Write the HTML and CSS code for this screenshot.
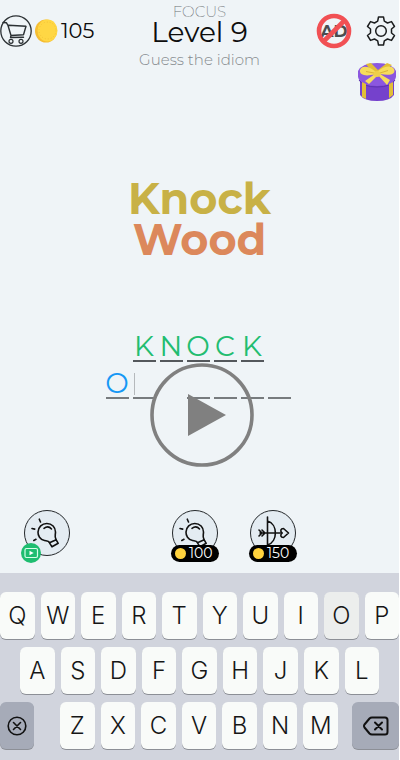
FILE: index.html
```html
<!DOCTYPE html>
<html lang="en">
<head>
<meta charset="utf-8">
<meta name="viewport" content="width=device-width, initial-scale=1">
<title>Guess the idiom</title>
<link rel="stylesheet" href="styles.css">
</head>
<body>
<svg class="symbols" aria-hidden="true">
  <symbol id="bulb" viewBox="1 1 44 44">
    <g fill="none" stroke="#111" stroke-width="1.600" stroke-linecap="round" stroke-linejoin="round">
      <path d="M25.500 32.500C24.500 30.800 23 31 20.500 30.500C16 29.500 13.800 25.500 14 22C14.300 17 18 13.500 22.800 13.500C28 13.500 31.500 17.500 31.500 22C31.500 25 30.300 26.500 32 29.500"/>
      <path d="M20 18.300C22.500 16.500 25.500 16.700 27.500 19"/>
      <path d="M25.500 32.800L32.200 29.800L34.200 33.300L28 36.800Z"/>
      <path d="M15.300 9.200L16.500 12M8 18.500L10.700 19.100M9.800 30.500L12 29.300"/>
    </g>
  </symbol>
</svg>
<div class="app">
  <header class="top">
    <div class="wallet">
      <button class="icon-button" aria-label="Shop">
        <svg class="cart" viewBox="0 0 32 32" fill="none" stroke="#2b3033" stroke-linecap="round" stroke-linejoin="round">
          <circle cx="16" cy="16" r="15.200" stroke-width="1.300"/>
          <path stroke-width="1.400" d="M3 7.500L6.500 7.800L8 10.500L11 20.500L23.500 19.700L26 11.300L8.500 10.300M11 20.500L10.500 22.500L23.500 22.200"/>
          <circle cx="11" cy="26.300" r="2" stroke-width="1.200"/><circle cx="21" cy="26.300" r="2" stroke-width="1.200"/>
        </svg>
      </button>
      <svg class="coin" viewBox="0 0 23 24"><ellipse cx="11" cy="12" rx="11" ry="11.500" fill="#f5bd32"/><ellipse cx="12.500" cy="11.500" rx="10" ry="11" fill="#ffd744"/><circle cx="12.500" cy="11.500" r="8.500" fill="none" stroke="#efbc35" stroke-width=".8" stroke-dasharray="1 2"/></svg>
      <span class="balance">105</span>
    </div>
    <div class="titles">
      <p class="mode">FOCUS</p>
      <h1>Level 9</h1>
      <p class="task">Guess the idiom</p>
    </div>
    <div class="tools">
      <button class="icon-button" aria-label="Remove ads">
        <svg class="no-ads" viewBox="0 0 36 36">
          <text x="18" y="23.500" text-anchor="middle" class="ad-text">AD</text>
          <circle cx="18" cy="18" r="15" fill="none" stroke="#f15054" stroke-width="4.600"/>
          <path d="M7.500 28.500L28.500 7.500" stroke="#f15054" stroke-width="4.600"/>
        </svg>
      </button>
      <button class="icon-button" aria-label="Settings">
        <svg class="gear" viewBox="0 0 30 30" fill="none" stroke="#1b1d1e" stroke-width="1.500" stroke-linejoin="round">
          <path d="M12.500 1H17.500L18.300 5.200L21.500 7L25.500 5.600L28.500 10.500L25.500 13V17L28.500 19.500L25.500 24.400L21.500 23L18.300 24.800L17.500 29H12.500L11.700 24.800L8.500 23L4.500 24.400L1.500 19.500L4.500 17V13L1.500 10.500L4.500 5.600L8.500 7L11.700 5.200Z"/>
          <circle cx="15" cy="15" r="5.300"/>
        </svg>
      </button>
      <button class="icon-button gift-button" aria-label="Gift">
        <svg class="gift" viewBox="0 0 38 38">
          <path d="M2 14V32Q6 38 19 38Q32 38 36 32V14Z" fill="#7541cc"/>
          <path d="M0 8Q4 0 19 0Q34 0 38 8V14Q36 23 19 23Q2 23 0 14Z" fill="#8b57df"/>
          <path d="M1 17Q5 24 19 24Q33 24 37 17" fill="none" stroke="#5c32b0" stroke-width="1"/>
          <path d="M4 19L8 21V36L4 34ZM31 21L35 19V32L31 35ZM8 1L13 0L20 7L29 0L34 2L22 12L16 12Z" fill="#e2be37"/>
          <path d="M18 9C11 3 4 2 2 7C1 12 8 14 17 11L7 18L11 21L20 12L29 22L32 17L22 11C33 13 38 11 36 6C33 2 26 3 19 9Z" fill="#f6dc5c"/>
          <path d="M16 10L8 8.500M22 10L30 7.500" stroke="#d9b237" stroke-width="1"/>
          <ellipse cx="19" cy="11" rx="3.500" ry="3" fill="#efcf48"/>
        </svg>
      </button>
    </div>
  </header>

  <main class="game">
    <p class="puzzle"><span class="word-knock">Knock</span><span class="word-wood">Wood</span></p>
    <section class="answer" aria-label="Answer">
      <div class="slots solved"><span>K</span><span>N</span><span>O</span><span>C</span><span>K</span></div>
      <div class="slots current"><span>O</span><span><i class="caret"></i></span><span class="space"></span><span></span><span></span><span></span><span></span></div>
      <button class="icon-button play" aria-label="Play">
        <svg viewBox="0 0 104 104"><circle cx="52" cy="52" r="50" fill="none" stroke="#808080" stroke-width="3.600"/><path d="M38 31L76 52L38 73Z" fill="#808080"/></svg>
      </button>
    </section>
  </main>

  <section class="hints" aria-label="Hints">
    <button class="hint" aria-label="Free hint, watch a video">
      <svg class="hint-icon"><use href="#bulb"/></svg>
      <svg class="video" viewBox="0 0 20 20"><circle cx="10" cy="10" r="10" fill="#1ebd70"/><rect x="4" y="5.500" width="12.500" height="9" rx="1.500" fill="none" stroke="#d6ffe9" stroke-width="1.200"/><path d="M8.500 7.700L12.700 10L8.500 12.300Z" fill="#fff"/></svg>
    </button>
    <div class="paid">
      <button class="hint">
        <svg class="hint-icon"><use href="#bulb"/></svg>
        <span class="price">100</span>
      </button>
      <button class="hint">
        <svg class="hint-icon" viewBox="1 1 44 44" fill="none" stroke="#111" stroke-width="1.600" stroke-linecap="round" stroke-linejoin="round">
          <path d="M17.500 7V35M17.500 11C28 14 28 32 17.500 35M10 23H32M9 20L12 23L9 26M12 20L15 23L12 26"/>
          <path d="M38.500 23L33.500 27.500C30.500 27.500 30 25 32 23C30 21 30.500 18.500 33.500 18.500Z"/>
        </svg>
        <span class="price">150</span>
      </button>
    </div>
  </section>

  <section class="keyboard" aria-label="Keyboard">
    <div class="keys"><button>Q</button><button>W</button><button>E</button><button>R</button><button>T</button><button>Y</button><button>U</button><button>I</button><button class="pressed">O</button><button>P</button></div>
    <div class="keys middle"><button>A</button><button>S</button><button>D</button><button>F</button><button>G</button><button>H</button><button>J</button><button>K</button><button>L</button></div>
    <div class="bottom-row">
      <button class="dark" aria-label="Clear"><svg width="20" height="20" viewBox="0 0 20 20" fill="none" stroke="#111" stroke-width="1.600" stroke-linecap="round"><circle cx="10" cy="10" r="8.800"/><path d="M6.500 6.500L13.500 13.500M13.500 6.500L6.500 13.500"/></svg></button>
      <div class="keys"><button>Z</button><button>X</button><button>C</button><button>V</button><button>B</button><button>N</button><button>M</button></div>
      <button class="dark" aria-label="Backspace"><svg width="26" height="20" viewBox="0 0 26 20" fill="none" stroke="#111" stroke-width="2" stroke-linecap="round" stroke-linejoin="round"><path d="M9 1.500H22Q24.500 1.500 24.500 4V16Q24.500 18.500 22 18.500H9Q7.500 18.500 6.500 17.500L1.500 11.500Q.5 10 1.500 8.500L6.500 2.500Q7.500 1.500 9 1.500Z"/><path d="M12 6.500L19 13.500M19 6.500L12 13.500"/></svg></button>
    </div>
  </section>
</div>
</body>
</html>
```

FILE: styles.css
```css
* { box-sizing: border-box; }
body {
  margin: 0;
  background: #fff;
  color: #0d0d0d;
  font-family: Montserrat, Inter, "Open Sans", sans-serif;
}
p, h1 { margin: 0; font-weight: 400; }
button { border: 0; padding: 0; background: none; font: inherit; color: inherit; }
svg { display: block; }
.symbols { position: absolute; width: 0; height: 0; }
.app {
  display: flex;
  flex-direction: column;
  min-height: 100vh;
  margin-right: 1px;
  background: #eff4f7;
}

.top {
  display: grid;
  grid-template-columns: 1fr auto 1fr;
  align-items: start;
}
.wallet { display: flex; align-items: center; gap: 3px; padding-top: 15px; }
.cart { width: 32px; height: 32px; }
.coin { width: 23px; height: 24px; }
.balance { font-size: 21px; line-height: 24px; }
.titles { padding-top: 4px; text-align: center; }
.mode { font-size: 15px; line-height: 16px; font-weight: 200; color: #6c7175; }
h1 { font-size: 28px; line-height: 24px; }
.task { padding-top: 6px; font-size: 15px; line-height: 20px; font-weight: 300; color: #84898d; }
.tools {
  display: grid;
  grid-template-columns: auto auto;
  justify-content: end;
  justify-items: end;
  align-items: center;
  column-gap: 14px;
  row-gap: 14px;
  padding: 13px 3px 0 0;
}
.no-ads { width: 36px; height: 36px; }
.ad-text { font-size: 17px; font-weight: 700; fill: #4a4d50; }
.gear { width: 30px; height: 30px; }
.gift-button { grid-column: 1 / -1; }
.gift { width: 38px; height: 38px; }

.game { flex: 1; text-align: center; }
.puzzle {
  display: flex;
  flex-direction: column;
  padding-top: 77px;
  font-size: 43px;
  line-height: 41px;
  font-weight: 700;
}
.word-knock { color: #c8b146; }
.word-wood { color: #dc885b; }
.answer { position: relative; padding: 72px 3px 0 0; }
.slots {
  display: flex;
  justify-content: center;
  gap: 4px;
  margin-bottom: 7px;
  font-size: 28px;
  line-height: 28px;
  font-weight: 400;
}
.slots span {
  display: flex;
  justify-content: center;
  width: 23px;
  height: 30px;
  border-bottom: 2px solid #54585c;
}
.slots .space { border-color: transparent; }
.solved { color: #22bd70; }
.current { color: #1698f5; }
.current span { border-color: #777b7e; }
.caret { width: 1px; height: 22px; margin: 4px auto 0 1px; background: #b5b9bc; }
.play { position: absolute; top: 103px; left: calc(50% - 50px); width: 104px; }

.hints { display: flex; justify-content: space-between; padding: 0 103px 17px 24px; }
.paid { display: flex; gap: 32px; }
.hint { position: relative; width: 46px; height: 46px; }
.hint-icon { width: 46px; height: 46px; border: 1px solid #24282b; border-radius: 50%; background: #e4ecf2; }
.video { position: absolute; left: -3px; bottom: -7px; width: 20px; height: 20px; }
.price {
  position: absolute;
  left: -1px;
  bottom: -6px;
  display: flex;
  align-items: center;
  gap: 3px;
  width: 48px;
  padding-left: 4px;
  border-radius: 9px;
  background: #000;
  color: #fff;
  font-size: 14px;
  line-height: 17px;
}
.price::before { content: ""; width: 11px; height: 11px; border-radius: 50%; background: #ffd23d; }

.keyboard {
  display: flex;
  flex-direction: column;
  gap: 8px;
  padding: 19px 0 11px;
  background: #d1d4dd;
  font-family: Inter, "Liberation Sans", sans-serif;
  font-size: 24px;
  font-weight: 300;
}
.keys { display: flex; gap: 6px; }
.middle { padding: 0 20px; }
.keyboard button {
  flex: 1;
  display: flex;
  align-items: center;
  justify-content: center;
  height: 47px;
  border-radius: 6px;
  background: #f9fbf9;
  box-shadow: 0 1px 0 #8c8f96;
  color: #161616;
}
.keyboard .pressed { background: #eceeed; }
.keyboard .dark { background: #a6abb8; }
.bottom-row { display: grid; grid-template-columns: 34fr 318fr 47fr; }
.bottom-row .keys { margin: 0 14px 0 26px; }
```
